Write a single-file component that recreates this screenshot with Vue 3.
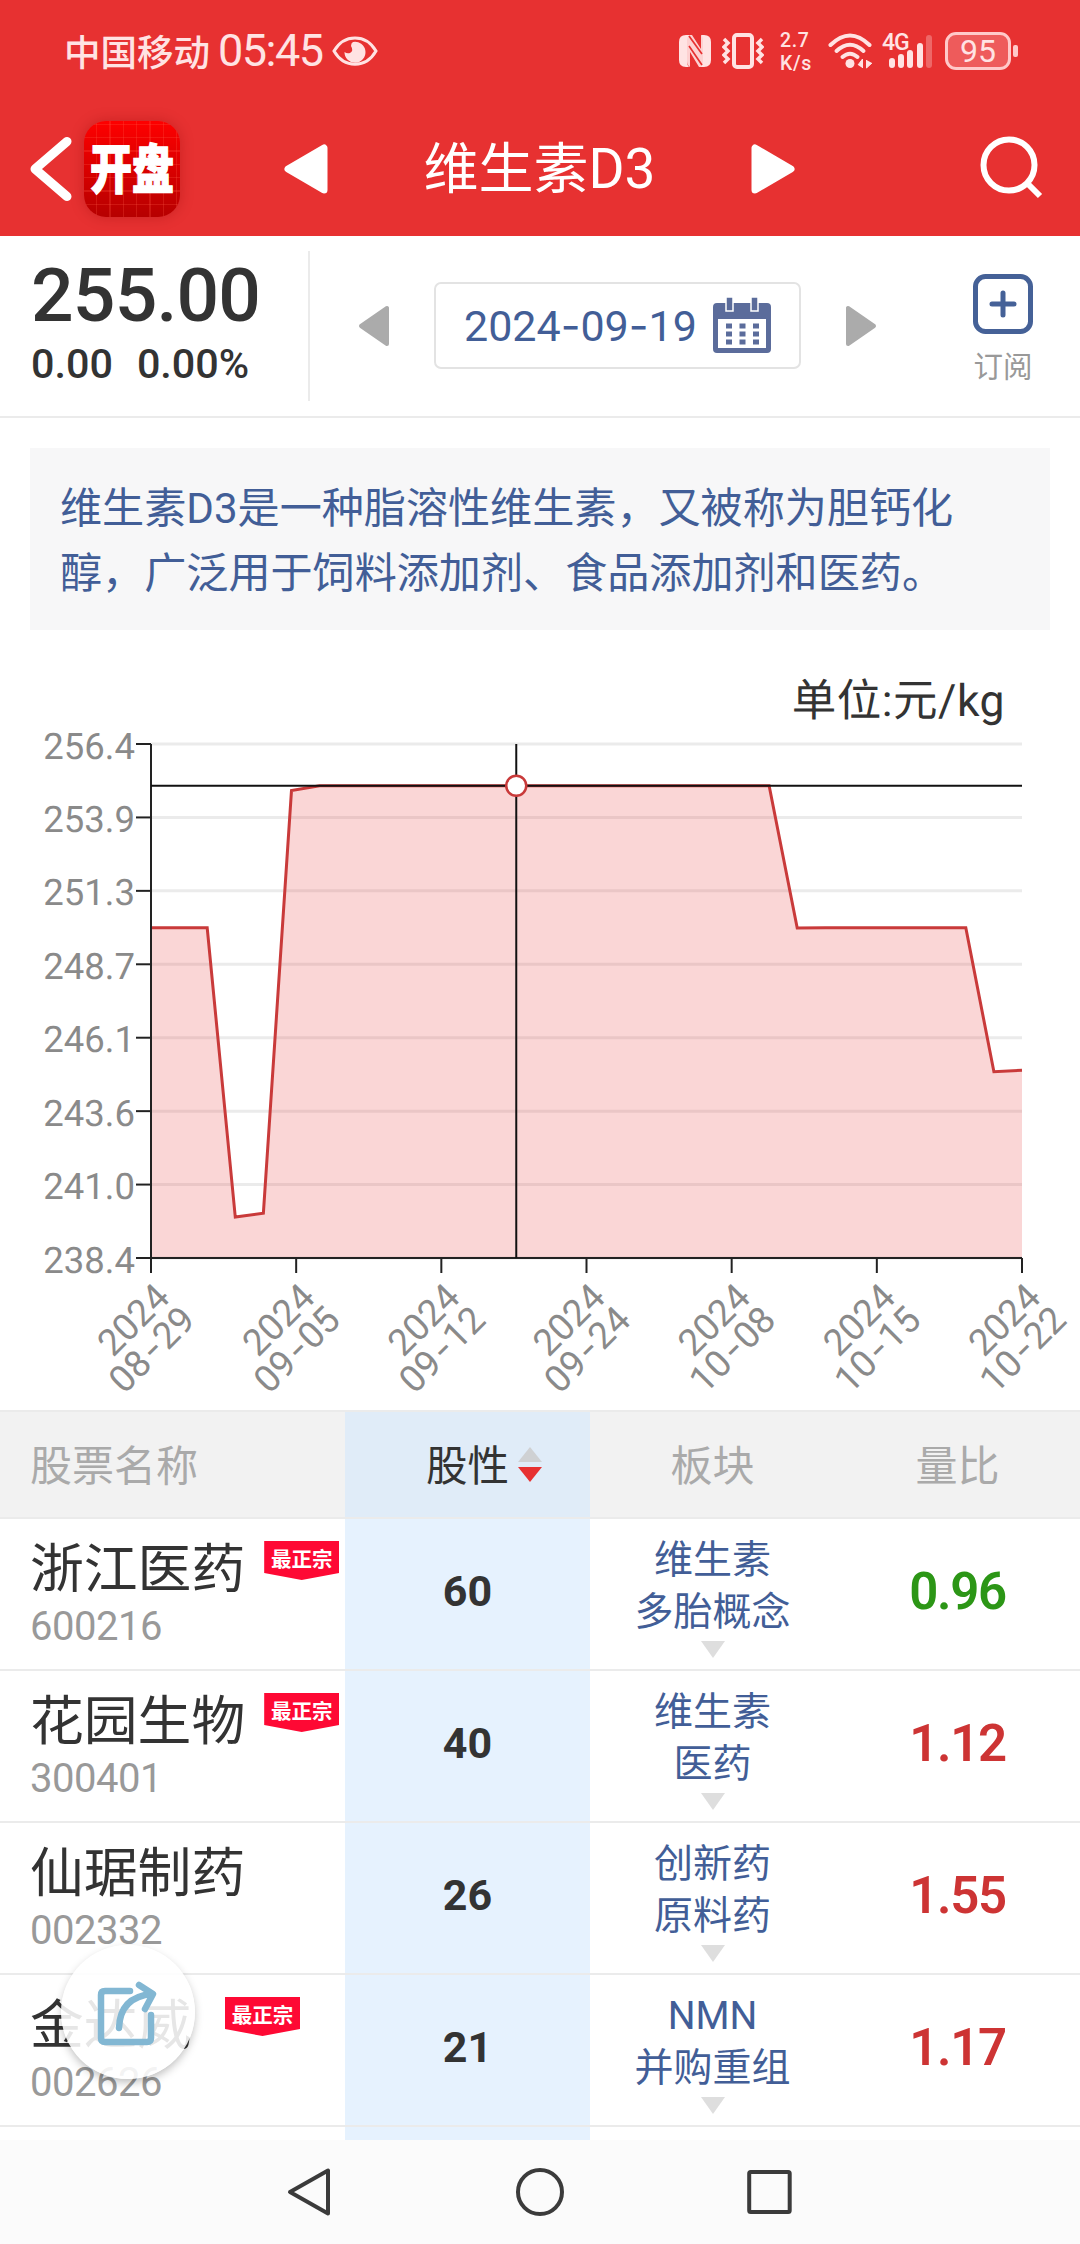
<script setup>
import { ref, computed } from 'vue'

const price = ref({ value: '255.00', change: '0.00', percent: '0.00%' })
const dateParts = ref(['2024', '09', '19'])

// chart geometry
const left = 151
const right = 1022
const top = 114
const bottom = 628
const minValue = 238.37
const maxValue = 256.47

const series = ref([
  250, 250, 250, 239.81, 239.95, 254.83,
  255, 255, 255, 255, 255, 255, 255, 255, 255, 255, 255, 255, 255, 255, 255, 255, 255,
  249.99, 250, 250, 250, 250, 250, 250, 244.93, 244.98,
])
const activeIndex = ref(13)

const yLabels = ['256.4', '253.9', '251.3', '248.7', '246.1', '243.6', '241.0', '238.4']
const xLabels = [
  ['08', '29'],
  ['09', '05'],
  ['09', '12'],
  ['09', '24'],
  ['10', '08'],
  ['10', '15'],
  ['10', '22'],
]

const getX = i => left + (i * (right - left)) / (series.value.length - 1)
const getY = v => bottom - ((v - minValue) * (bottom - top)) / (maxValue - minValue)

const yTicks = computed(() => yLabels.map((label, i) => ({
  label,
  y: top + (i * (bottom - top)) / (yLabels.length - 1),
})))
const xTicks = computed(() => xLabels.map((label, i) => ({
  label,
  x: left + (i * (right - left)) / (xLabels.length - 1),
})))
const points = computed(() => series.value.map((v, i) => `${getX(i)},${getY(v)}`).join(' '))
const area = computed(() => `${left},${bottom} ${points.value} ${right},${bottom}`)
const activePoint = computed(() => ({
  x: getX(activeIndex.value),
  y: getY(series.value[activeIndex.value]),
}))

const stocks = ref([
  { name: '浙江医药', code: '600216', best: true, score: 60, sectors: ['维生素', '多胎概念'], ratio: '0.96' },
  { name: '花园生物', code: '300401', best: true, score: 40, sectors: ['维生素', '医药'], ratio: '1.12' },
  { name: '仙琚制药', code: '002332', best: false, score: 26, sectors: ['创新药', '原料药'], ratio: '1.55' },
  { name: '金达威', code: '002626', best: true, score: 21, sectors: ['NMN', '并购重组'], ratio: '1.17' },
])
</script>

<template>
  <main class="app">
    <header class="header">
      <div class="status">
        <span class="carrier">中国移动</span>
        <span class="clock">05:45</span>
        <svg class="eye" width="46" height="32" viewBox="0 0 46 32">
          <path d="M2 16 C12 -1.500 34 -1.500 44 16 C34 33.500 12 33.500 2 16 Z" fill="none" stroke="currentColor" stroke-width="3" />
          <path d="M21 7 A10.500 10.500 0 1 1 12.500 17 Q15 19 18 18 Q22 16 19 11 Q19 8 21 7 Z" fill="currentColor" />
        </svg>
        <div class="status-icons">
          <svg width="32" height="34" viewBox="0 0 32 34">
            <path d="M7 1 H10 Q8 3 8 6 V27 Q8 31 10 33 H7 Q0 33 0 26 V8 Q0 1 7 1 Z" fill="currentColor" />
            <path d="M25 33 H22 Q24 31 24 28 V7 Q24 3 22 1 H25 Q32 1 32 8 V26 Q32 33 25 33 Z" fill="currentColor" />
            <path d="M8 1 H13 L22 15 V1 Q25 3 25 7 V33 H20 L11 18 V33 Q8 31 8 27 Z" fill="currentColor" opacity="0.9" />
            <path d="M10 2 L23 20 M10 12 L23 31" stroke="#e73131" stroke-width="1.700" />
          </svg>
          <svg class="vibrate" width="42" height="36" viewBox="0 0 42 36">
            <rect x="12" y="2" width="18" height="32" rx="3" fill="none" stroke="currentColor" stroke-width="4" />
            <path d="M2 6 L6 10 L2 14 L6 18 L2 22 L6 26 L2 30 M40 6 L36 10 L40 14 L36 18 L40 22 L36 26 L40 30" fill="none" stroke="currentColor" stroke-width="3.500" />
          </svg>
          <div class="speed">
            <span>2.7</span>
            <span>K/s</span>
          </div>
          <svg class="wifi" width="46" height="36" viewBox="0 0 46 36">
            <g fill="none" stroke="currentColor" stroke-width="4" stroke-linecap="round">
              <path d="M2.500 12 Q22 -7 41.500 12" />
              <path d="M8.500 18 Q22 5.500 35.500 18" />
              <path d="M14.500 24 Q22 17.500 29.500 24" />
            </g>
            <circle cx="22" cy="30.500" r="4.500" fill="currentColor" />
            <path d="M30 32 L34.500 26 V35 M44 30 L38.500 35 V27" fill="currentColor" stroke="currentColor" stroke-width="1" />
          </svg>
          <div class="signal">
            <span class="net">4G</span>
            <svg width="44" height="36" viewBox="0 0 44 36">
              <g stroke="currentColor" stroke-width="6" stroke-linecap="round">
                <path d="M4 28 V32 M13 24 V32 M22 20 V32 M32 13 V32" />
                <path d="M41 5 V32" opacity="0.300" />
              </g>
            </svg>
          </div>
          <div class="battery">95</div>
        </div>
      </div>

      <nav class="nav">
        <svg class="back" width="44" height="66" viewBox="0 0 44 66">
          <path d="M37 5.500 L5 33 L37 60.500" fill="none" stroke="#fff" stroke-width="9" stroke-linecap="round" stroke-linejoin="round" />
        </svg>
        <div class="logo"><span>开盘</span></div>
        <svg class="prev" width="44" height="50" viewBox="0 0 44 50">
          <path d="M40 4 V46 L4 25 Z" fill="#fff" stroke="#fff" stroke-width="7" stroke-linejoin="round" />
        </svg>
        <h1 class="title">维生素D3</h1>
        <svg class="next" width="44" height="50" viewBox="0 0 44 50">
          <path d="M4 4 V46 L40 25 Z" fill="#fff" stroke="#fff" stroke-width="7" stroke-linejoin="round" />
        </svg>
        <svg class="search" width="64" height="66" viewBox="0 0 64 66">
          <circle cx="30" cy="29" r="25.500" fill="none" stroke="#fff" stroke-width="6" />
          <path d="M48 47 L61 60" stroke="#fff" stroke-width="6" />
        </svg>
      </nav>
    </header>

    <section class="quote">
      <div class="price">
        <div class="price-value">{{ price.value }}</div>
        <div class="price-change">
          <span>{{ price.change }}</span>
          <span>{{ price.percent }}</span>
        </div>
      </div>
      <div class="date">
        <svg width="32" height="42" viewBox="0 0 32 42">
          <path d="M29 3 V39 L3 21 Z" fill="#ababab" stroke="#ababab" stroke-width="4" stroke-linejoin="round" />
        </svg>
        <div class="date-box">
          <span class="date-text">{{ dateParts[0] }}<i>-</i>{{ dateParts[1] }}<i>-</i>{{ dateParts[2] }}</span>
          <svg width="58" height="56" viewBox="0 0 58 56">
            <path d="M4 6 H54 Q58 6 58 10 V52 Q58 56 54 56 H4 Q0 56 0 52 V10 Q0 6 4 6 Z M5 22 V51 H53 V22 Z" fill="#5b6c9b" fill-rule="evenodd" />
            <path d="M13 0 H20 V14 H13 Z M38 0 H45 V14 H38 Z" fill="#5b6c9b" stroke="#fff" stroke-width="1.500" />
            <path d="M13 29 H19 M26.500 29 H32.500 M40 29 H46 M13 37 H19 M26.500 37 H32.500 M40 37 H46 M13 45 H19 M26.500 45 H32.500 M40 45 H46" stroke="#5b6c9b" stroke-width="5" />
          </svg>
        </div>
        <svg width="32" height="42" viewBox="0 0 32 42">
          <path d="M3 3 V39 L29 21 Z" fill="#ababab" stroke="#ababab" stroke-width="4" stroke-linejoin="round" />
        </svg>
      </div>
      <div class="subscribe">
        <svg width="60" height="60" viewBox="0 0 60 60">
          <rect x="2.500" y="2.500" width="55" height="55" rx="10" fill="none" stroke="#456197" stroke-width="5" />
          <path d="M19 30 H41 M30 19 V41" stroke="#456197" stroke-width="5" stroke-linecap="round" />
        </svg>
        <span>订阅</span>
      </div>
    </section>

    <p class="intro">维生素D3是一种脂溶性维生素，又被称为胆钙化醇，广泛用于饲料添加剂、食品添加剂和医药。</p>

    <svg class="chart" width="1080" height="780" viewBox="0 0 1080 780">
      <text class="unit" x="1005" y="86" text-anchor="end">单位:元/kg</text>
      <g v-for="tick in yTicks" :key="tick.label">
        <line class="grid-line" :x1="left" :x2="right" :y1="tick.y" :y2="tick.y" />
        <text class="label" x="135" :y="tick.y + 14.5" text-anchor="end">{{ tick.label }}</text>
      </g>
      <polygon class="area" :points="area" />
      <polyline class="line" :points="points" />
      <line v-for="tick in yTicks" :key="tick.y" class="axis" x1="136" :x2="left" :y1="tick.y" :y2="tick.y" />
      <line class="axis" :x1="left" :x2="left" :y1="top" :y2="bottom" />
      <line class="axis" :x1="left" :x2="right" :y1="bottom" :y2="bottom" />
      <g v-for="tick in xTicks" :key="tick.x">
        <line class="axis" :x1="tick.x" :x2="tick.x" :y1="bottom" :y2="bottom + 15" />
        <g :transform="`translate(${tick.x + 20}, 670) rotate(-45)`">
          <text class="label date-label" x="1" y="0" text-anchor="end">2024</text>
          <text class="label date-label" x="3" y="34" text-anchor="end">{{ tick.label[0] }}<tspan class="dash" dx="2">-</tspan>{{ tick.label[1] }}</text>
        </g>
      </g>
      <line class="cross" :x1="left" :x2="right" :y1="activePoint.y" :y2="activePoint.y" />
      <line class="cross" :x1="activePoint.x" :x2="activePoint.x" :y1="top" :y2="bottom" />
      <circle class="dot" :cx="activePoint.x" :cy="activePoint.y" r="10" />
    </svg>

    <section class="table">
      <div class="row head">
        <div class="cell name-cell">股票名称</div>
        <div class="cell score-cell">
          <span class="sort">股性
            <svg width="24" height="36" viewBox="0 0 24 36">
              <path d="M12 0 L24 15 H0 Z" fill="#cfd1d3" />
              <path d="M12 35 L24 20 H0 Z" fill="#e73131" />
            </svg>
          </span>
        </div>
        <div class="cell">板块</div>
        <div class="cell">量比</div>
      </div>
      <div class="row" v-for="stock in stocks" :key="stock.code">
        <div class="cell name-cell">
          <div class="name-line">
            <span class="name">{{ stock.name }}</span>
            <span v-if="stock.best" class="badge">最正宗</span>
          </div>
          <span class="code">{{ stock.code }}</span>
        </div>
        <div class="cell score-cell">{{ stock.score }}</div>
        <div class="cell sector-cell">
          <span v-for="sector in stock.sectors" :key="sector">{{ sector }}</span>
          <i class="more"></i>
        </div>
        <div class="cell ratio" :class="stock.ratio < 1 ? 'down' : 'up'">{{ stock.ratio }}</div>
      </div>
      <div class="row rest">
        <div class="cell"></div>
        <div class="cell score-cell"></div>
      </div>
      <button class="share">
        <svg width="60" height="66" viewBox="0 0 60 66">
          <g fill="none" stroke="#82b7d3" stroke-width="6.500" stroke-linecap="round" stroke-linejoin="round">
            <path d="M33 10 H8 Q4 10 4 14 V57 Q4 61 8 61 H50 Q54 61 54 57 V34" />
            <path d="M22 47 Q23 16 55 13 M42 4 L56 13 L48 28" />
          </g>
        </svg>
      </button>
    </section>

    <footer class="system">
      <svg width="48" height="52" viewBox="0 0 48 52">
        <path d="M41 4.500 V47.500 L3 26 Z" fill="none" stroke="#3b3b3b" stroke-width="4" stroke-linejoin="round" />
      </svg>
      <svg width="52" height="52" viewBox="0 0 52 52">
        <circle cx="26" cy="26" r="22" fill="none" stroke="#3b3b3b" stroke-width="4" />
      </svg>
      <svg width="48" height="52" viewBox="0 0 48 52">
        <rect x="4.200" y="6" width="40.500" height="40" rx="1.500" fill="none" stroke="#3b3b3b" stroke-width="4" />
      </svg>
    </footer>
  </main>
</template>

<style>
body {
  margin: 0;
  background-color: #fff;
}
</style>

<style scoped>
.app {
  display: flex;
  flex-direction: column;
  width: 1080px;
  height: 2244px;
  overflow: hidden;
  font-family: Roboto, "Noto Sans CJK SC", sans-serif;
  color: #333;
}

.app svg {
  display: block;
  flex: none;
}

.header {
  height: 236px;
  background-color: #e73131;
  color: #fff;
}

.status {
  display: flex;
  align-items: center;
  height: 101px;
  padding: 0 62px 0 64px;
  color: #ffe3e3;
}

.carrier {
  width: 154px;
  font-size: 36.5px;
  font-weight: 500;
  white-space: nowrap;
}

.clock {
  width: 114px;
  font-size: 45px;
  letter-spacing: -1.5px;
}

.status-icons {
  display: flex;
  align-items: center;
  margin-left: auto;
}

.vibrate {
  margin-left: 11px;
}

.speed {
  display: flex;
  flex-direction: column;
  width: 36px;
  margin: 2px 11px 0 16px;
  font-size: 19.5px;
  line-height: 23px;
  font-weight: 500;
  letter-spacing: 0.6px;
}

.wifi {
  margin-left: 1px;
}

.signal {
  position: relative;
  margin: 0 13px 0 14px;
}

.net {
  position: absolute;
  left: -6px;
  top: -2px;
  font-size: 23px;
  line-height: 24px;
  font-weight: 500;
  letter-spacing: -1px;
}

.battery {
  position: relative;
  box-sizing: border-box;
  width: 66px;
  height: 38px;
  margin-right: 7px;
  border: 3px solid #ffc9c9;
  border-radius: 11px;
  background-color: #ee5b5b;
  font-size: 32px;
  line-height: 33px;
  text-align: center;
}

.battery::after {
  content: '';
  position: absolute;
  right: -10px;
  top: 10px;
  width: 5px;
  height: 12px;
  border-radius: 2px;
  background-color: #ffc9c9;
}

.nav {
  display: flex;
  align-items: center;
  height: 135px;
  padding: 0 37px 0 30px;
}

.back {
  margin-right: 10px;
}

.logo {
  display: flex;
  align-items: center;
  justify-content: center;
  width: 96px;
  height: 96px;
  border-radius: 22px;
  background-image:
    repeating-linear-gradient(90deg, transparent 0, transparent 12px, rgba(255, 90, 70, 0.25) 12px, rgba(255, 90, 70, 0.25) 13.300px),
    repeating-linear-gradient(0deg, transparent 0, transparent 12px, rgba(255, 90, 70, 0.25) 12px, rgba(255, 90, 70, 0.25) 13.300px),
    linear-gradient(#fe0000, #b60000);
  box-shadow: 0 0 14px rgba(130, 0, 0, 0.3);
}

.logo span {
  margin-bottom: 6px;
  font-family: "Noto Sans CJK SC", sans-serif;
  font-size: 42px;
  line-height: 50px;
  font-weight: 900;
  -webkit-text-stroke: 1px #fff;
  white-space: nowrap;
  transform: scaleY(1.28);
}

.prev {
  margin-left: 104px;
}

.title {
  width: 423px;
  margin: 0;
  font-size: 55px;
  font-weight: 400;
  line-height: 70px;
  text-align: center;
}

.search {
  margin-left: auto;
}

.quote {
  box-sizing: border-box;
  display: flex;
  align-items: center;
  height: 182px;
  border-bottom: 2px solid #ebebeb;
}

.price {
  box-sizing: border-box;
  width: 310px;
  height: 150px;
  padding-left: 31px;
  border-right: 2px solid #ebebeb;
}

.price-value {
  font-size: 75px;
  line-height: 89px;
  font-weight: 500;
  letter-spacing: -0.8px;
}

.price-change {
  display: flex;
  gap: 24px;
  font-size: 41.3px;
  line-height: 48px;
  font-weight: 500;
}

.date {
  display: flex;
  align-items: center;
  justify-content: space-between;
  width: 519px;
  margin-left: 48px;
}

.date-box {
  box-sizing: border-box;
  display: flex;
  align-items: center;
  justify-content: space-between;
  width: 367px;
  height: 87px;
  margin-bottom: 2px;
  padding: 0 28px 0 28px;
  border: 2px solid #e3e3e3;
  border-radius: 7px;
}

.date-text {
  font-size: 43px;
  color: #425e97;
  white-space: nowrap;
}

.date-text i {
  font-family: Inter, sans-serif;
  font-style: normal;
}

.subscribe {
  display: flex;
  flex-direction: column;
  align-items: center;
  width: 60px;
  margin-top: 9px;
  margin-left: 96px;
  gap: 12px;
  font-size: 29.5px;
  line-height: 42px;
  color: #999;
  white-space: nowrap;
}

.intro {
  box-sizing: border-box;
  height: 182px;
  margin: 30px 30px 0;
  padding: 28px 30px 24px;
  background-color: #f7f7f8;
  font-size: 42.1px;
  line-height: 65px;
  color: #425e97;
}

.chart {
  text-rendering: geometricPrecision;
}

.unit {
  font-size: 44.5px;
  letter-spacing: 0.5px;
  fill: #333;
}

.label {
  font-size: 36.5px;
  fill: #8a8a8a;
}

.date-label {
  font-size: 37px;
}

.dash {
  font-family: Inter, sans-serif;
  letter-spacing: 1px;
}

.grid-line {
  stroke: #ebebeb;
  stroke-width: 3;
}

.area {
  fill: rgba(230, 50, 50, 0.2);
}

.line {
  fill: none;
  stroke: #c93a3a;
  stroke-width: 3;
}

.axis {
  stroke: #222;
  stroke-width: 2;
}

.cross {
  stroke: #111;
  stroke-width: 2;
}

.dot {
  fill: #fff;
  stroke: #c93a3a;
  stroke-width: 2.5;
}

.table {
  position: relative;
  height: 730px;
  overflow: hidden;
}

.row {
  box-sizing: border-box;
  display: grid;
  grid-template-columns: 345px 245px 245px 245px;
  height: 152px;
  border-bottom: 2px solid #ebebeb;
}

.cell {
  display: flex;
  align-items: center;
  justify-content: center;
  padding-bottom: 6px;
}

.score-cell {
  background-color: #e6f2fe;
  font-size: 43px;
  font-weight: 700;
}

.head {
  height: 109px;
  border-top: 2px solid #ebebeb;
  background-color: #f2f2f2;
  font-size: 42px;
  color: #aaa;
}

.head .cell {
  padding-bottom: 4px;
}

.head .score-cell {
  background-color: #e0ecf8;
  font-size: 41.5px;
  font-weight: 400;
  color: #333;
}

.name-cell {
  flex-direction: column;
  align-items: flex-start;
  padding-left: 30px;
}

.sort {
  position: relative;
}

.sort svg {
  position: absolute;
  right: -33px;
  top: 14px;
}

.name-line {
  display: flex;
  gap: 19px;
  margin-top: 2px;
}

.name {
  min-width: 176px;
  font-size: 53.8px;
  line-height: 70px;
  white-space: nowrap;
}

.badge {
  width: 75px;
  height: 39px;
  margin-top: 6px;
  background-color: #fe0934;
  clip-path: polygon(0 0, 100% 0, 100% 82%, 50% 100%, 0 82%);
  font-family: "Noto Sans CJK SC", sans-serif;
  font-size: 20.5px;
  font-weight: 700;
  line-height: 34px;
  text-align: center;
  color: #fff;
}

.code {
  font-size: 40px;
  line-height: 44px;
  letter-spacing: -0.5px;
  color: #999;
}

.sector-cell {
  flex-direction: column;
  justify-content: flex-start;
  padding-top: 15px;
  padding-bottom: 0;
  font-size: 39px;
  line-height: 52px;
  color: #425e97;
}

.more {
  margin-top: 3px;
  border: 12px solid transparent;
  border-top: 17px solid #dedede;
  border-bottom: 0;
}

.ratio {
  font-size: 51px;
  font-weight: 600;
  letter-spacing: -1.4px;
}

.up {
  color: #cd3434;
}

.down {
  color: #2c9616;
}

.rest {
  height: 15px;
  border-bottom: none;
}

.rest .cell {
  padding: 0;
}

.share {
  position: absolute;
  left: 61px;
  top: 535px;
  display: flex;
  align-items: center;
  justify-content: center;
  width: 134px;
  height: 134px;
  padding: 3px 2px 0 0;
  border: none;
  border-radius: 50%;
  background-color: rgba(255, 255, 255, 0.88);
  box-shadow: 0 4px 10px -1px rgba(0, 0, 0, 0.28);
}

.system {
  display: flex;
  align-items: center;
  justify-content: center;
  gap: 179px;
  height: 104px;
  background-color: #fbfbfb;
}
</style>
